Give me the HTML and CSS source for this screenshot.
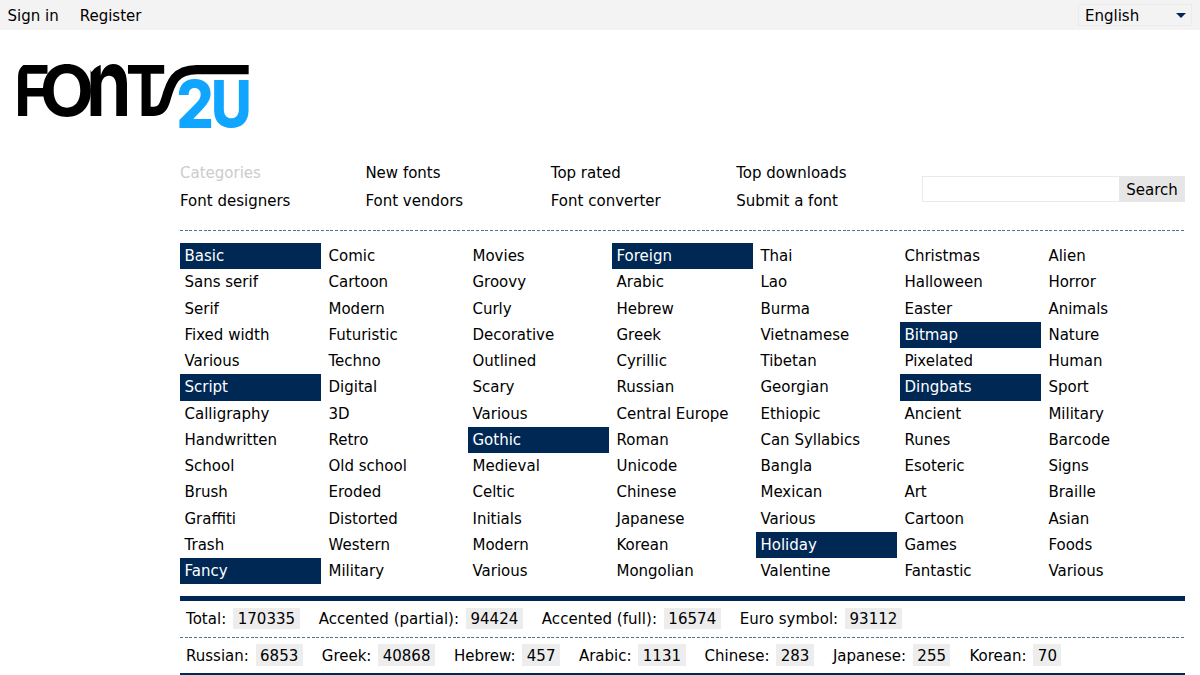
FILE: index.html
```html
<!DOCTYPE html>
<html lang="en">
<head>
<meta charset="utf-8">
<title>Fonts2u</title>
<link rel="stylesheet" href="styles.css">
</head>
<body>
<header class="topbar">
  <nav class="account"><a>Sign in</a><a>Register</a></nav>
  <div class="language"><span>English</span><svg class="caret" viewBox="0 0 10 5"><path d="M0 0H10L5 5Z"/></svg></div>
</header>
<a class="logo">
  <svg class="logo-art" viewBox="45 30 720 210" role="img" aria-label="Fonts2u">
    <g class="logo-dark">
      <text transform="translate(42 198) scale(.87 1)" font-size="212">F</text>
      <path class="corner" d="M48 36H92C68 42 54 54 54 82H48Z"/>
      <text transform="translate(119 198) scale(1 1)" font-size="212">O</text>
      <text transform="translate(258 198) scale(.77 1)" font-size="285">n</text>
      <path class="corner" d="M266 34H322V41C300 42 284 52 275 66L266 54Z"/>
      <text transform="translate(377 198) scale(.87 1)" font-size="210">T</text>
      <path class="swoosh" d="M440 184H462C482 184 490 172 497 150C512 96 526 59 590 59H746"/>
    </g>
    <g class="logo-blue">
      <text transform="translate(529 234) scale(.9 1)" font-size="197">2</text>
      <text transform="translate(633 232) scale(.87 1)" font-size="193">U</text>
    </g>
  </svg>
</a>
<main class="content">
  <div class="head">
    <nav class="menu">
      <a class="current">Categories</a><a>New fonts</a><a>Top rated</a><a>Top downloads</a>
      <a>Font designers</a><a>Font vendors</a><a>Font converter</a><a>Submit a font</a>
    </nav>
    <form class="search"><input class="field" type="text" aria-label="Search fonts"><button class="go" type="button">Search</button></form>
  </div>
  <div class="dashes"></div>
  <section class="categories">
    <ul><li class="group">Basic</li><li>Sans serif</li><li>Serif</li><li>Fixed width</li><li>Various</li><li class="group">Script</li><li>Calligraphy</li><li>Handwritten</li><li>School</li><li>Brush</li><li>Graffiti</li><li>Trash</li><li class="group">Fancy</li></ul>
    <ul><li>Comic</li><li>Cartoon</li><li>Modern</li><li>Futuristic</li><li>Techno</li><li>Digital</li><li>3D</li><li>Retro</li><li>Old school</li><li>Eroded</li><li>Distorted</li><li>Western</li><li>Military</li></ul>
    <ul><li>Movies</li><li>Groovy</li><li>Curly</li><li>Decorative</li><li>Outlined</li><li>Scary</li><li>Various</li><li class="group">Gothic</li><li>Medieval</li><li>Celtic</li><li>Initials</li><li>Modern</li><li>Various</li></ul>
    <ul><li class="group">Foreign</li><li>Arabic</li><li>Hebrew</li><li>Greek</li><li>Cyrillic</li><li>Russian</li><li>Central Europe</li><li>Roman</li><li>Unicode</li><li>Chinese</li><li>Japanese</li><li>Korean</li><li>Mongolian</li></ul>
    <ul><li>Thai</li><li>Lao</li><li>Burma</li><li>Vietnamese</li><li>Tibetan</li><li>Georgian</li><li>Ethiopic</li><li>Can Syllabics</li><li>Bangla</li><li>Mexican</li><li>Various</li><li class="group">Holiday</li><li>Valentine</li></ul>
    <ul><li>Christmas</li><li>Halloween</li><li>Easter</li><li class="group">Bitmap</li><li>Pixelated</li><li class="group">Dingbats</li><li>Ancient</li><li>Runes</li><li>Esoteric</li><li>Art</li><li>Cartoon</li><li>Games</li><li>Fantastic</li></ul>
    <ul><li>Alien</li><li>Horror</li><li>Animals</li><li>Nature</li><li>Human</li><li>Sport</li><li>Military</li><li>Barcode</li><li>Signs</li><li>Braille</li><li>Asian</li><li>Foods</li><li>Various</li></ul>
  </section>
  <section class="stats">
    <div class="row totals"><span>Total: <b>170335</b></span><span>Accented (partial): <b>94424</b></span><span>Accented (full): <b>16574</b></span><span>Euro symbol: <b>93112</b></span></div>
    <div class="dashes"></div>
    <div class="row scripts"><span>Russian: <b>6853</b></span><span>Greek: <b>40868</b></span><span>Hebrew: <b>457</b></span><span>Arabic: <b>1131</b></span><span>Chinese: <b>283</b></span><span>Japanese: <b>255</b></span><span>Korean: <b>70</b></span></div>
  </section>
</main>
</body>
</html>
```
FILE: styles.css
```css
* { box-sizing: border-box; }
body {
  margin: 0;
  height: 675px;
  overflow: hidden;
  background: #fff;
  color: #000;
  font: 15px/26px Verdana, "DejaVu Sans", sans-serif;
}
.topbar {
  display: flex;
  justify-content: space-between;
  align-items: flex-start;
  height: 30px;
  padding: 3px 8px 0 7.5px;
  background: #f3f3f3;
}
.account { display: flex; gap: 21px; }
.language {
  display: flex;
  justify-content: space-between;
  align-items: center;
  width: 114px;
  height: 22px;
  margin-top: 1px;
  padding: 1px 5px 0 6px;
  border: 1px solid #ebebeb;
  line-height: 22px;
}
.caret { width: 10px; height: 5px; margin-bottom: 1px; fill: #002855; }
.logo { display: block; width: 240px; margin: 30px 0 0 15px; }
.logo-art { display: block; width: 240px; height: 70px; overflow: visible; font-family: Inter, sans-serif; font-weight: 700; }
.logo-dark { fill: #000; }
.logo-blue { fill: #10a5ff; font-weight: 800; }
.corner { fill: #fff; }
.swoosh { fill: none; stroke: #000; stroke-width: 28; }
.content { width: 1005px; margin: 29px 0 0 180px; }
.head { display: flex; justify-content: space-between; height: 71px; }
.menu {
  display: grid;
  grid-template-columns: repeat(4, 185.4px);
  grid-auto-rows: 28px;
  line-height: 28px;
}
.current { color: #ccc; }
.search { display: flex; width: 264px; height: 26px; margin-top: 17px; }
.field { flex: 1; min-width: 0; border: 1px solid #eaeaea; border-right: 0; background: #fff; padding: 0; }
.go { width: 66px; height: 26px; padding: 3px 0 0; border: 0; background: #e6e6e6; color: #000; font: inherit; line-height: 23px; }
.dashes { height: 1px; background: repeating-linear-gradient(90deg, #57708c 0 3px, #fff 3px 4.7px); }
.categories { display: flex; gap: 3.3px; width: 1008px; margin-top: 12px; }
.categories ul { flex: none; width: 140.7px; margin: 0; padding: 0; list-style: none; }
.categories li { height: 26.25px; padding-left: 4.5px; line-height: 27.25px; }
.group { background: #002855; color: #fff; }
.stats { margin-top: 11.5px; border-top: 5px solid #002855; border-bottom: 2px solid #002855; }
.row { display: flex; height: 36px; padding: 7px 0 0 6px; line-height: 21px; white-space: nowrap; }
.row span { margin-right: 19px; }
.row b { display: inline-block; height: 21px; margin-left: 2px; padding: 0 4.5px; background: #ededed; font-weight: 400; line-height: 23px; }
.totals { letter-spacing: .04px; }
.scripts { height: 35px; padding-top: 6px; }
.scripts b { height: 22px; line-height: 24px; }
```
